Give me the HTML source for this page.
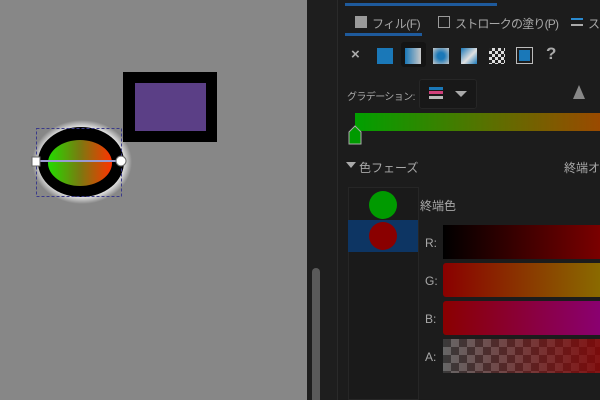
<!DOCTYPE html>
<html><head><meta charset="utf-8"><style>
*{margin:0;padding:0;box-sizing:border-box}
html,body{width:600px;height:400px;overflow:hidden}
body{background:#1c1c1c;position:relative;font-family:"Liberation Sans","Noto Sans CJK JP",sans-serif;color:#a8a8a8;font-size:12px}
.a{position:absolute}
</style></head><body>
<div class="a" style="left:0;top:0;width:307px;height:400px;background:#878787"></div>
<svg class="a" style="left:0;top:0" width="307" height="400">
<defs>
<radialGradient id="gl" cx="50%" cy="50%" r="50%"><stop offset="0.78" stop-color="#fff"/><stop offset="1" stop-color="#878787"/></radialGradient>
<linearGradient id="gr" x1="0" x2="1"><stop offset="0" stop-color="#22dd00"/><stop offset="0.5" stop-color="#7a7a10"/><stop offset="1" stop-color="#ff3300"/></linearGradient>
</defs>
<ellipse cx="82" cy="162" rx="50" ry="42" fill="url(#gl)"/>
<ellipse cx="81" cy="162" rx="43" ry="35" fill="#000"/>
<ellipse cx="80" cy="163" rx="32" ry="23" fill="url(#gr)"/>
<rect x="36.5" y="128.5" width="85" height="68" fill="none" stroke="#3a3a8a" stroke-dasharray="3,2"/>
<line x1="36" y1="161" x2="121" y2="161" stroke="#9a9ad0" stroke-width="2"/>
<rect x="32" y="157" width="8" height="9" fill="#fff" stroke="#666"/>
<circle cx="121" cy="161" r="5" fill="#fff" stroke="#666"/>
<rect x="123" y="72" width="94" height="70" fill="#000"/>
<rect x="135" y="83" width="71" height="48" fill="#5b3f86"/>
</svg>
<div class="a" style="left:307px;top:0;width:31px;height:400px;background:#1e1e1e;border-right:1px solid #2a2a2a"></div>
<div class="a" style="left:312px;top:268px;width:8px;height:132px;background:#5a5a5a;border-radius:4px 4px 0 0"></div>
<div class="a" style="left:345px;top:3px;width:152px;height:3px;background:#1e5a9c"></div>
<div class="a" style="left:355px;top:16px;width:12px;height:12px;background:#9a9a9a"></div>
<div class="a" style="left:372px;top:15px;font-size:12px;letter-spacing:-0.5px">フィル(F)</div>
<div class="a" style="left:438px;top:16px;width:12px;height:12px;border:1.5px solid #9a9a9a"></div>
<div class="a" style="left:455px;top:15px;font-size:12px;letter-spacing:-0.8px">ストロークの塗り(P)</div>
<div class="a" style="left:571px;top:18px;width:12px;height:2px;background:#2a8ad0"></div>
<div class="a" style="left:571px;top:24px;width:12px;height:2px;background:#aaa"></div>
<div class="a" style="left:588px;top:15px;font-size:12px">ス</div>
<div class="a" style="left:345px;top:33px;width:77px;height:3px;background:#1e5a9c"></div>
<div class="a" style="left:351px;top:46px;font-size:15px;font-weight:bold;color:#aaa">×</div>
<div class="a" style="left:377px;top:48px;width:16px;height:16px;background:#1a78b8"></div>
<div class="a" style="left:401px;top:42px;width:25px;height:25px;background:#141414;border-radius:3px"></div>
<div class="a" style="left:405px;top:48px;width:16px;height:16px;background:linear-gradient(90deg,#1a78b8,#c8c8c8)"></div>
<div class="a" style="left:433px;top:48px;width:16px;height:16px;background:radial-gradient(#1a78b8 30%,#c8c8c8)"></div>
<div class="a" style="left:461px;top:48px;width:16px;height:16px;background:linear-gradient(135deg,#1a78b8,#e0e0e0 55%,#1a78b8)"></div>
<div class="a" style="left:489px;top:48px;width:16px;height:16px;background:repeating-conic-gradient(#ddd 0 25%,#222 0 50%) 0 0/6px 6px"></div>
<div class="a" style="left:516px;top:47px;width:17px;height:17px;border:1.5px solid #bbb;padding:2px"><div style="width:100%;height:100%;background:#1a78b8"></div></div>
<div class="a" style="left:546px;top:44px;font-size:17px;font-weight:bold;color:#aaa">?</div>
<div class="a" style="left:347px;top:88px;font-size:10px;letter-spacing:-0.6px">グラデーション:</div>
<div class="a" style="left:419px;top:79px;width:58px;height:30px;background:#181818;border:1px solid #262626;border-radius:3px"></div>
<div class="a" style="left:429px;top:87px;width:14px;height:3px;background:#1a78b8"></div>
<div class="a" style="left:429px;top:91px;width:14px;height:3px;background:#d0407a"></div>
<div class="a" style="left:429px;top:96px;width:14px;height:3px;background:#bbb"></div>
<div class="a" style="left:455px;top:91px;border-left:6px solid transparent;border-right:6px solid transparent;border-top:6px solid #aaa"></div>
<div class="a" style="left:573px;top:85px;border-left:6px solid transparent;border-right:6px solid transparent;border-bottom:14px solid #888"></div>
<div class="a" style="left:355px;top:113px;width:245px;height:18px;background:linear-gradient(90deg,#00a000,#5a7000 55%,#9a4a00)"></div>
<svg class="a" style="left:347px;top:124px" width="16" height="21"><path d="M2 20 V8 L8 2 L14 8 V20 Z" fill="#009a00" stroke="#aaa"/></svg>
<div class="a" style="left:346px;top:162px;border-left:5px solid transparent;border-right:5px solid transparent;border-top:6px solid #aaa"></div>
<div class="a" style="left:359px;top:159px;font-size:12px">色フェーズ</div>
<div class="a" style="left:564px;top:159px;font-size:12px">終端オ</div>
<div class="a" style="left:348px;top:187px;width:71px;height:213px;background:#1a1a1a;border:1px solid #262626"></div>
<div class="a" style="left:369px;top:191px;width:28px;height:28px;border-radius:50%;background:#009a00"></div>
<div class="a" style="left:348px;top:220px;width:70px;height:32px;background:#0d3563"></div>
<div class="a" style="left:369px;top:222px;width:28px;height:28px;border-radius:50%;background:#8a0000"></div>
<div class="a" style="left:420px;top:197px;font-size:12px">終端色</div>
<div class="a" style="left:425px;top:236px">R:</div>
<div class="a" style="left:425px;top:274px">G:</div>
<div class="a" style="left:425px;top:312px">B:</div>
<div class="a" style="left:425px;top:350px">A:</div>
<div class="a" style="left:443px;top:225px;width:157px;height:34px;background:linear-gradient(90deg,#000,#7a0000)"></div>
<div class="a" style="left:443px;top:263px;width:157px;height:34px;background:linear-gradient(90deg,#8a0000,#8a6a00);border-radius:3px 0 0 3px"></div>
<div class="a" style="left:443px;top:301px;width:157px;height:34px;background:linear-gradient(90deg,#8a0000,#8a0070);border-radius:3px 0 0 3px"></div>
<div class="a" style="left:443px;top:339px;width:157px;height:34px;background:linear-gradient(90deg,rgba(138,0,0,0),rgba(138,0,0,0.8)),repeating-conic-gradient(#666 0 25%,#3a3a3a 0 50%) 0 0/16px 16px"></div>
</body></html>
